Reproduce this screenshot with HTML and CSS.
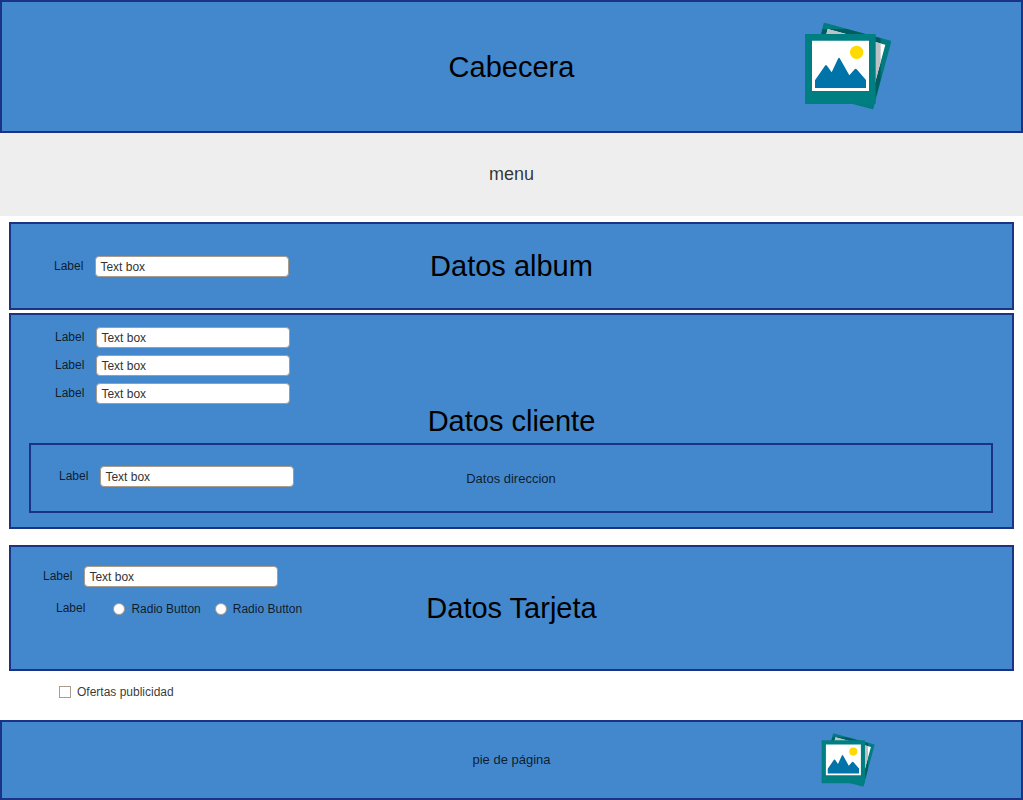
FILE: index.html
```html
<!DOCTYPE html>
<html lang="es">
<head>
<meta charset="utf-8">
<meta name="viewport" content="width=device-width, initial-scale=1">
<title>Cabecera</title>
<link rel="stylesheet" href="styles.css">
</head>
<body>
<svg class="defs" aria-hidden="true">
  <defs>
    <clipPath id="back-frame"><path d="M103 39 303 93 248 297 47 243Z"/></clipPath>
    <clipPath id="back-photo"><path d="M113 57 286 104 245 255 75 210Z"/></clipPath>
    <symbol id="photos" viewBox="45 36 258 264">
      <path d="M103 40 302 94 248 296 50 243Z" fill="#007c80" stroke="#007c80" stroke-width="4" stroke-linejoin="round"/>
      <path d="M45 57H272V268H45Z" fill="#005c61" clip-path="url(#back-frame)"/>
      <path d="M113 57 286 104 245 255 75 210Z" fill="#fff"/>
      <path d="M45 57H272V268H45Z" fill="#bec1c3" clip-path="url(#back-photo)"/>
      <path d="M45 72H257V282H45Z" fill="#007f83"/>
      <path d="M66 92H237V243H66Z" fill="#fff"/>
      <path d="M75 234V211L105 167Q108 163 111 167L125 187 144 146Q147 141 150 146L178 196 194 178Q197 175 200 178L228 210V234Z" fill="#0074a8"/>
      <circle cx="200" cy="127" r="20" fill="#ffda00"/>
    </symbol>
  </defs>
</svg>

<header class="band header">
  <h1 class="title">Cabecera</h1>
  <div class="logo"><svg class="photos" role="img" aria-label="Fotos"><use href="#photos"/></svg></div>
</header>

<nav class="menu">menu</nav>

<main class="content">
  <form class="form">
    <section class="panel album">
      <div class="fields">
        <div class="field"><label for="album">Label</label><input class="text" id="album" type="text" value="Text box"></div>
      </div>
      <h2 class="title">Datos album</h2>
    </section>

    <section class="panel client">
      <div class="fields">
        <div class="field"><label for="client-1">Label</label><input class="text" id="client-1" type="text" value="Text box"></div>
        <div class="field"><label for="client-2">Label</label><input class="text" id="client-2" type="text" value="Text box"></div>
        <div class="field"><label for="client-3">Label</label><input class="text" id="client-3" type="text" value="Text box"></div>
      </div>
      <h2 class="title">Datos cliente</h2>
      <section class="panel address">
        <div class="fields">
          <div class="field"><label for="address">Label</label><input class="text" id="address" type="text" value="Text box"></div>
        </div>
        <h3 class="subtitle">Datos direccion</h3>
      </section>
    </section>

    <section class="panel card">
      <div class="fields">
        <div class="field"><label for="card">Label</label><input class="text" id="card" type="text" value="Text box"></div>
        <div class="field options" role="radiogroup" aria-labelledby="card-type">
          <span id="card-type" class="options-name">Label</span>
          <label class="choice"><input class="radio" type="radio" name="card-type">Radio Button</label>
          <label class="choice"><input class="radio" type="radio" name="card-type">Radio Button</label>
        </div>
      </div>
      <h2 class="title">Datos Tarjeta</h2>
    </section>

    <div class="offers">
      <label class="choice"><input class="check" type="checkbox">Ofertas publicidad</label>
    </div>
  </form>
</main>

<footer class="band footer">
  <p class="subtitle">pie de página</p>
  <div class="logo"><svg class="photos" role="img" aria-label="Fotos"><use href="#photos"/></svg></div>
</footer>
</body>
</html>
```
FILE: styles.css
```css
* {
  box-sizing: border-box;
}

body {
  margin: 0;
  background: #fff;
  color: rgba(0, 0, 0, 0.8);
  font: 12px/20px "Liberation Sans", Arial, sans-serif;
}

.defs {
  display: block;
  width: 0;
  height: 0;
}

.band,
.panel {
  display: grid;
  grid-template-columns: repeat(3, 1fr);
  align-items: center;
  border: 2px solid #1a3385;
  background: #4388cd;
}

.title {
  grid-column: 2;
  margin: 0;
  color: #000;
  font-size: 29px;
  font-weight: 400;
  line-height: 34px;
  text-align: center;
}

.subtitle {
  grid-column: 2;
  margin: 0;
  font-size: 13px;
  font-weight: 400;
  line-height: 20px;
  text-align: center;
}

.logo {
  display: flex;
  justify-content: center;
  padding-right: 6px;
}

.photos {
  display: block;
  width: 86px;
  height: 88px;
}

.header {
  padding: 20px 0 21px;
}

.header .title {
  padding-top: 2px;
}

.footer {
  padding: 11px 0;
}

.footer .photos {
  width: 54px;
  height: 54px;
}

.menu {
  padding: 31px 0 32px;
  background: #eee;
  font-size: 18px;
  text-align: center;
}

.content {
  padding: 6px 9px 0;
}

.fields {
  display: grid;
  gap: 7px;
}

.field {
  display: flex;
  align-items: flex-start;
  gap: 12px;
}

.text {
  width: 194px;
  height: 21px;
  padding: 1px 4px 0;
  border: 1px solid #aa9c8c;
  border-radius: 4px;
  background: #fff;
  color: #333;
  font: inherit;
}

.album {
  min-height: 88px;
  margin-bottom: 3px;
}

.album .fields {
  padding-left: 43px;
}

.client {
  margin-bottom: 16px;
  padding: 12px 0 14px;
}

.client > .fields {
  padding: 0 0 39px 44px;
}

.client > .title {
  align-self: end;
  padding-bottom: 5px;
}

.address {
  grid-column: 1 / -1;
  min-height: 70px;
  margin: 0 19px 0 18px;
}

.address .fields {
  padding: 0 0 4px 28px;
}

.address .subtitle {
  padding-top: 2px;
}

.card {
  min-height: 126px;
}

.card .fields {
  align-self: start;
  gap: 11px;
  padding: 19px 0 0 32px;
}

.options {
  gap: 14px;
  padding-left: 13px;
  white-space: nowrap;
}

.options-name {
  padding-right: 14px;
}

.choice {
  display: flex;
  align-items: center;
  gap: 6px;
}

.options .choice {
  padding-top: 1px;
}

.radio,
.check {
  width: 12px;
  height: 12px;
  margin: 0;
  appearance: none;
  border: 1px solid #aa9c8c;
  background: #fff;
}

.radio {
  border-radius: 50%;
}

.radio:checked,
.check:checked {
  background: #1a3385;
}

.offers {
  padding: 11px 50px 18px;
}
```
